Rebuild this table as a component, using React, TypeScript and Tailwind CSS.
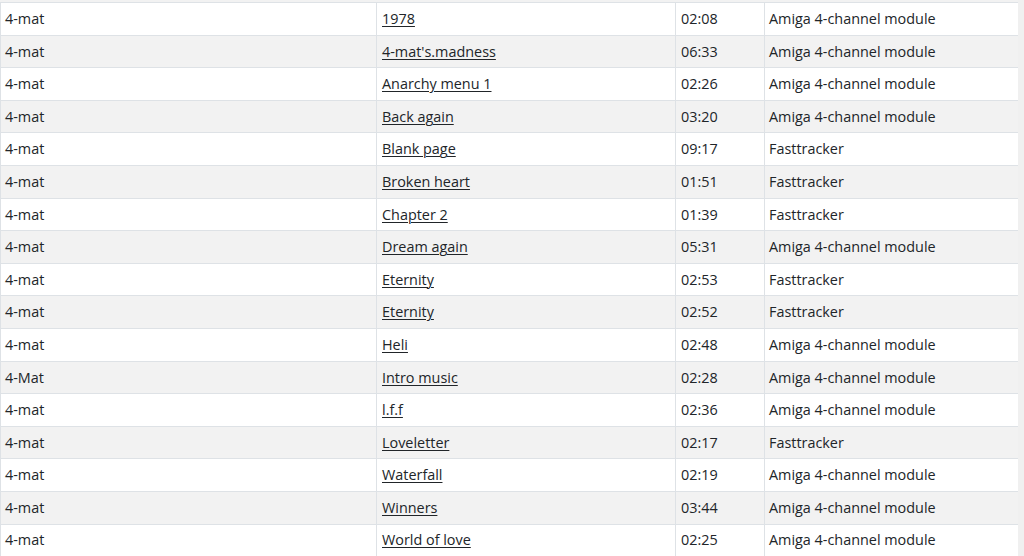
const rows: [string, string, string, string][] = [
  ['4-mat', '1978', '02:08', 'Amiga 4-channel module'],
  ['4-mat', "4-mat's.madness", '06:33', 'Amiga 4-channel module'],
  ['4-mat', 'Anarchy menu 1', '02:26', 'Amiga 4-channel module'],
  ['4-mat', 'Back again', '03:20', 'Amiga 4-channel module'],
  ['4-mat', 'Blank page', '09:17', 'Fasttracker'],
  ['4-mat', 'Broken heart', '01:51', 'Fasttracker'],
  ['4-mat', 'Chapter 2', '01:39', 'Fasttracker'],
  ['4-mat', 'Dream again', '05:31', 'Amiga 4-channel module'],
  ['4-mat', 'Eternity', '02:53', 'Fasttracker'],
  ['4-mat', 'Eternity', '02:52', 'Fasttracker'],
  ['4-mat', 'Heli', '02:48', 'Amiga 4-channel module'],
  ['4-Mat', 'Intro music', '02:28', 'Amiga 4-channel module'],
  ['4-mat', 'l.f.f', '02:36', 'Amiga 4-channel module'],
  ['4-mat', 'Loveletter', '02:17', 'Fasttracker'],
  ['4-mat', 'Waterfall', '02:19', 'Amiga 4-channel module'],
  ['4-mat', 'Winners', '03:44', 'Amiga 4-channel module'],
  ['4-mat', 'World of love', '02:25', 'Amiga 4-channel module'],
];

export default function App() {
  return (
    <div
      className="h-[556px] w-[1024px] overflow-hidden bg-white text-[14.4px] text-[#212529]"
      style={{ fontFamily: '"Open Sans", "Noto Sans", sans-serif' }}
    >
      <div className="flex h-full">
        <div className="w-[1018px] shrink-0">
          {/* tail of the row above, scrolled out of view */}
          <div className="h-[2px] bg-[#f2f2f2]" />
          <table className="w-[1018px] table-fixed border-collapse">
            <colgroup>
              <col className="w-[376px]" />
              <col className="w-[299px]" />
              <col className="w-[89px]" />
              <col className="w-[254px]" />
            </colgroup>
            <tbody>
              {rows.map(([artist, title, time, format], i) => (
                <tr key={i} className={i % 2 === 1 ? 'bg-[#f2f2f2]' : 'bg-white'}>
                  <td className="h-[32.6px] border border-[#dee2e6] pl-[4px] pr-[5px] py-0 align-middle">{artist}</td>
                  <td className="border border-[#dee2e6] px-[5px] py-0 align-middle">
                    <a href="#" className="underline decoration-1 underline-offset-2">
                      {title}
                    </a>
                  </td>
                  <td className="border border-[#dee2e6] px-[5px] py-0 align-middle">{time}</td>
                  <td className="border border-[#dee2e6] pl-[4px] pr-[5px] py-0 align-middle">{format}</td>
                </tr>
              ))}
            </tbody>
          </table>
        </div>
        <div className="flex-1 bg-[#f0f0f0]" />
      </div>
    </div>
  );
}
